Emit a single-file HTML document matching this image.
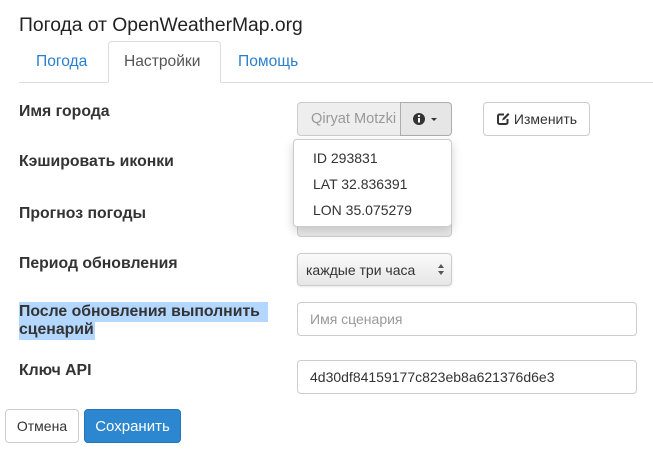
<!DOCTYPE html>
<html><head><meta charset="utf-8"><style>
*{box-sizing:border-box;margin:0;padding:0}
body{width:653px;height:452px;background:#fff;font-family:"Liberation Sans",Arial,sans-serif;color:#333;position:relative;overflow:hidden}
.a{position:absolute}
.lbl{position:absolute;left:19px;font-weight:bold;font-size:15.8px;color:#333;line-height:18px}
.inp{position:absolute;border:1px solid #ccc;border-radius:4px;background:#fff;font-size:14px;padding:0 12px;display:flex;align-items:center}
.btn{position:absolute;border:1px solid #ccc;border-radius:4px;background:#fff;font-size:14px;display:flex;align-items:center;justify-content:center;color:#333}
</style></head><body>
<div class="a" style="left:19px;top:15px;font-size:19.3px;color:#222">Погода от OpenWeatherMap.org</div>
<div class="a" style="left:19px;top:82px;width:634px;height:1px;background:#ddd"></div>
<div class="a" style="left:108px;top:41px;width:113px;height:42px;border:1px solid #ddd;border-bottom-color:#fff;border-radius:4px 4px 0 0;background:#fff"></div>
<div class="a" style="left:36px;top:53px;font-size:15.6px;color:#2a7fce">Погода</div>
<div class="a" style="left:124px;top:53px;font-size:15.6px;color:#555">Настройки</div>
<div class="a" style="left:238px;top:53px;font-size:15.6px;color:#2a7fce">Помощь</div>

<div class="lbl" style="top:103px">Имя города</div>
<div class="lbl" style="top:153px">Кэшировать иконки</div>
<div class="lbl" style="top:205px">Прогноз погоды</div>
<div class="lbl" style="top:255px">Период обновления</div>
<div class="a" style="left:19px;top:302px;width:249px;height:20px;background:#b3d7fe"></div>
<div class="a" style="left:19px;top:322px;width:76px;height:18px;background:#b3d7fe"></div>
<div class="lbl" style="top:303px">После обновления выполнить<br>сценарий</div>
<div class="lbl" style="top:362px">Ключ API</div>

<div class="inp" style="left:297px;top:102px;width:104px;height:34px;background:#eee;color:#999;border-radius:4px 0 0 4px;overflow:hidden;white-space:nowrap;padding-left:13px;font-size:14.6px">Qiryat Motzki</div>
<div class="btn" style="left:400px;top:102px;width:52px;height:34px;background:#e6e6e6;border-color:#adadad;border-radius:0 4px 4px 0">
<svg width="14" height="14" viewBox="0 0 14 14"><circle cx="7" cy="7" r="6" fill="#333"/><rect x="6" y="6" width="2" height="4.5" fill="#fff"/><circle cx="7" cy="4" r="1.1" fill="#fff"/></svg>
<svg width="12" height="8" viewBox="0 0 12 8" style="margin-left:2px"><path d="M3 3h6L6 6z" fill="#333"/></svg></div>
<div class="btn" style="left:483px;top:102px;width:107px;height:34px">
<svg width="14" height="14" viewBox="0 0 14 14" style="margin-right:4px"><path d="M8 2.5H3.5a1.5 1.5 0 0 0-1.5 1.5v6.5A1.5 1.5 0 0 0 3.5 12H10a1.5 1.5 0 0 0 1.5-1.5V7" fill="none" stroke="#333" stroke-width="2"/><path d="M6 8.5l1-2.5 5-5 1.5 1.5-5 5z" fill="#333"/></svg>Изменить</div>

<div class="a" style="left:297px;top:205px;width:155px;height:32px;border:1px solid #ccc;border-radius:4px;background:linear-gradient(#fff,#e8e8e8)"></div>
<div class="a" style="left:293px;top:139px;width:159px;height:88px;background:#fff;border:1px solid #ccc;border-radius:4px;box-shadow:0 4px 10px rgba(0,0,0,.18)"></div>
<div class="a" style="left:313px;top:150px;font-size:14px;color:#333">ID 293831</div>
<div class="a" style="left:313px;top:176px;font-size:14px;color:#333">LAT 32.836391</div>
<div class="a" style="left:313px;top:202px;font-size:14px;color:#333">LON 35.075279</div>

<div class="a" style="left:297px;top:253px;width:155px;height:33px;border:1px solid #ccc;border-radius:4px;background:linear-gradient(#fafafa,#e6e6e6);box-shadow:0 1px 2px rgba(0,0,0,.1)"></div>
<div class="a" style="left:306px;top:262px;font-size:14px;color:#333">каждые три часа</div>
<svg class="a" style="left:437px;top:263px" width="8" height="13" viewBox="0 0 8 13"><path d="M1 5L4 1l3 4z M1 8l3 4 3-4z" fill="#555"/></svg>

<div class="inp" style="left:297px;top:302px;width:340px;height:34px;color:#999">Имя сценария</div>
<div class="inp" style="left:297px;top:360px;width:340px;height:34px;color:#333">4d30df84159177c823eb8a621376d6e3</div>

<div class="btn" style="left:5px;top:409px;width:74px;height:34px">Отмена</div>
<div class="btn" style="left:84px;top:409px;width:97px;height:34px;background:#2d87d0;border-color:#2474b8;color:#fff;font-size:15px">Сохранить</div>
</body></html>
